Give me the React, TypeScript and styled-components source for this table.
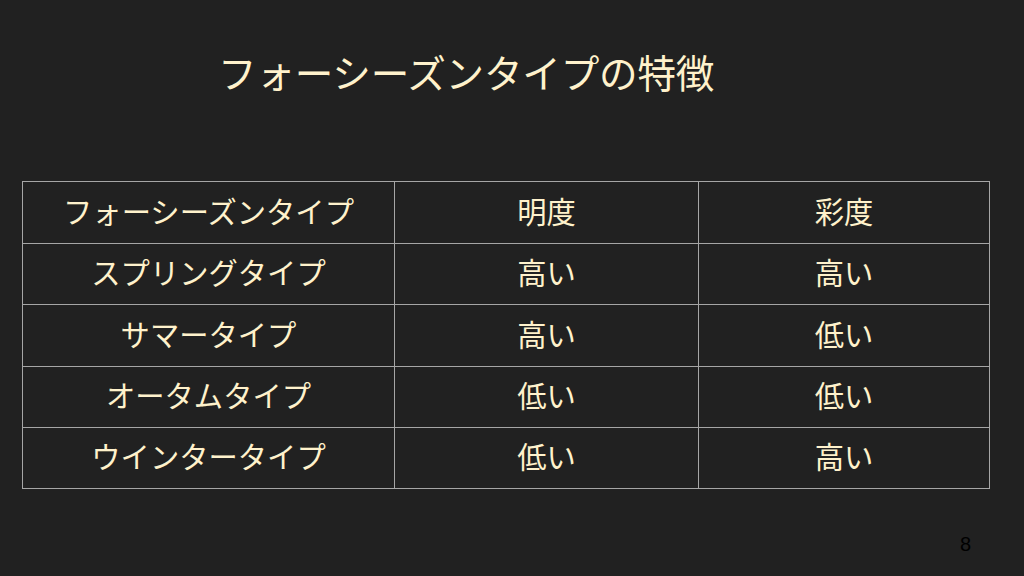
import React from 'react';
import styled, { createGlobalStyle } from 'styled-components';

const GlobalStyle = createGlobalStyle`
  html, body {
    margin: 0;
    padding: 0;
    background-color: #212121;
  }
`;

const Slide = styled.div`
  width: 1024px;
  height: 576px;
  background-color: #212121;
  display: flex;
  flex-direction: column;
  font-family: 'Noto Sans CJK JP', 'Noto Sans', sans-serif;
  color: #fff2cc;
  overflow: hidden;
`;

const Title = styled.h1`
  margin: 0;
  padding: 47px 0 0 218px;
  height: 49px;
  line-height: 49px;
  font-size: 38.6px;
  font-weight: 400;
  letter-spacing: -0.2px;
`;

const Grid = styled.table`
  margin: 85px 0 0 22px;
  width: 967px;
  border-collapse: collapse;
  table-layout: fixed;
`;

const Col = styled.col<{ $w: number }>`
  width: ${(p) => p.$w}px;
`;

const Row = styled.tr<{ $h: number }>`
  height: ${(p) => p.$h}px;
`;

const Cell = styled.td`
  border: 1px solid #a6a6a6;
  padding: 0 0 6px;
  text-align: center;
  vertical-align: middle;
  font-size: 29.3px;
  line-height: 40px;
  font-weight: 400;
`;

const Footer = styled.div`
  display: flex;
  justify-content: flex-end;
  padding: 43px 53px 0 0;
`;

const PageNumber = styled.span`
  font-family: 'Liberation Sans', Arial, sans-serif;
  font-size: 20px;
  line-height: 24px;
  color: #000000;
`;

const rows = [
  { h: 62, cells: ['フォーシーズンタイプ', '明度', '彩度'] },
  { h: 61, cells: ['スプリングタイプ', '高い', '高い'] },
  { h: 62, cells: ['サマータイプ', '高い', '低い'] },
  { h: 61, cells: ['オータムタイプ', '低い', '低い'] },
  { h: 61, cells: ['ウインタータイプ', '低い', '高い'] },
];

const App: React.FC = () => {
  return (
    <>
      <GlobalStyle />
      <Slide>
        <Title>フォーシーズンタイプの特徴</Title>
        <Grid>
          <colgroup>
            <Col $w={372} />
            <Col $w={304} />
            <Col $w={291} />
          </colgroup>
          <tbody>
            {rows.map((row, i) => (
              <Row key={i} $h={row.h}>
                {row.cells.map((text, j) => (
                  <Cell key={j}>{text}</Cell>
                ))}
              </Row>
            ))}
          </tbody>
        </Grid>
        <Footer>
          <PageNumber>8</PageNumber>
        </Footer>
      </Slide>
    </>
  );
};

export default App;
